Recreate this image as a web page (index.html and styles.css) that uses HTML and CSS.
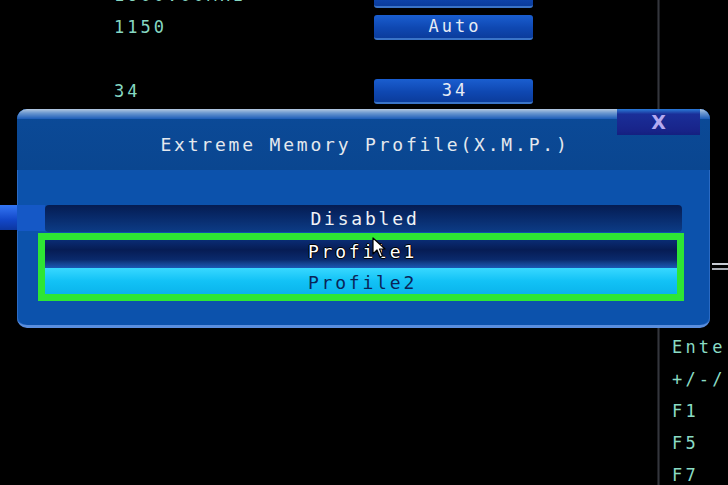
FILE: index.html
```html
<!DOCTYPE html>
<html>
<head>
<meta charset="utf-8">
<title>Extreme Memory Profile</title>
<link rel="stylesheet" href="styles.css">
</head>
<body>
<div class="screen">
  <div class="settings">
    <div class="row"><span class="label">1600.00MHz</span><span class="btn">Auto</span></div>
    <div class="row"><span class="label">1150</span><span class="btn">Auto</span></div>
    <div class="row"></div>
    <div class="row"><span class="label">34</span><span class="btn">34</span></div>
    <div class="row"></div>
    <div class="row"></div>
    <div class="row"></div>
    <div class="row active"></div>
  </div>
  <div class="divider"></div>
  <div class="help">
    <div class="rule"></div>
    <ul class="keys">
      <li>Enter</li>
      <li>+/-/</li>
      <li>F1</li>
      <li>F5</li>
      <li>F7</li>
    </ul>
  </div>

  <div class="dialog">
    <div class="dialog-head">
      <h1 class="title">Extreme Memory Profile(X.M.P.)</h1>
      <div class="close">X</div>
    </div>
    <div class="dialog-body">
      <div class="marker"></div>
      <div class="options">
        <div class="option">Disabled</div>
        <div class="focus">
          <div class="option selected">Profile1</div>
          <div class="option current">Profile2</div>
        </div>
      </div>
    </div>
  </div>

  <svg class="cursor" width="14" height="22" viewBox="0 0 14 22">
    <path d="M1 1 L1 17 L5 13 L8 20 L10.5 19 L7.5 12 L13 12 Z" fill="#ffffff" stroke="#000000" stroke-width="1.2" stroke-linejoin="round"/>
  </svg>
</div>
</body>
</html>
```

FILE: styles.css
```css
* { box-sizing: border-box; }

html, body {
  margin: 0;
  padding: 0;
  background: #000;
}

body {
  width: 728px;
  height: 485px;
  overflow: hidden;
  font-family: "DejaVu Sans Mono", "Liberation Mono", monospace;
}

.screen {
  position: relative;
  width: 728px;
  height: 485px;
  display: grid;
  grid-template-columns: 657px 3px 1fr;
  overflow: hidden;
}

/* settings list behind the dialog */
.settings {
  margin-top: -21px;
}

.row {
  height: 32px;
  display: grid;
  grid-template-columns: 374px 159px;
  align-items: center;
}

.row.active {
  background: linear-gradient(#3476f4, #1247c8 60%, #0c36a0) no-repeat 0 2px / 100% 25px;
}

.label {
  padding-left: 114px;
  color: #86d8c2;
  font-size: 17px;
  letter-spacing: 3px;
}

.btn {
  height: 25px;
  display: flex;
  align-items: center;
  justify-content: center;
  padding-left: 3px;
  border-radius: 3px;
  background: linear-gradient(#1a5ed0, #0f48b2 55%, #0b3c9c);
  border-bottom: 2px solid #3a74c8;
  color: #e6ecf4;
  font-size: 17px;
  letter-spacing: 3px;
}

.divider {
  background: linear-gradient(90deg, #101014, #34363c, #101014);
}

/* help column on the right */
.help {
  padding-top: 263px;
}

.rule {
  margin-left: 52px;
  height: 7px;
  border-top: 2px solid #c8ccd4;
  border-bottom: 2px solid #a8acb4;
}

.keys {
  list-style: none;
  margin: 61px 0 0;
  padding: 0 0 0 12px;
  color: #8adcc4;
  font-size: 17px;
  letter-spacing: 3.2px;
  white-space: nowrap;
}

.keys li {
  height: 32px;
  line-height: 32px;
}

/* XMP dialog */
.dialog {
  position: absolute;
  left: 17px;
  top: 109px;
  width: 693px;
  height: 219px;
  border-radius: 10px;
  background: #0c52ac;
  border-bottom: 3px solid #5a8ede;
  overflow: hidden;
  box-shadow: inset 1px 0 0 #2a6ac4, inset -1px 0 0 #2a6ac4;
}

.dialog-head {
  position: relative;
  height: 61px;
  padding-top: 9px;
  background:
    linear-gradient(#b4c8e0, #6c98d0 40%, #1c5cb8) no-repeat 0 0 / 100% 10px,
    linear-gradient(#0b4a98, #0a4690);
}

.title {
  margin: 0;
  height: 52px;
  display: flex;
  align-items: center;
  justify-content: center;
  padding-left: 3px;
  font-weight: normal;
  font-size: 18px;
  letter-spacing: 2.8px;
  color: #e4e8ee;
}

.close {
  position: absolute;
  top: 0;
  right: 10px;
  width: 83px;
  height: 26px;
  display: flex;
  align-items: center;
  justify-content: center;
  background: linear-gradient(#2a7ad8, #1a2e98 20%, #18248a 80%, #142080);
  color: #b4aaf0;
  font-family: "DejaVu Sans", sans-serif;
  font-size: 19px;
  font-weight: bold;
}

.dialog-body {
  position: relative;
  padding: 35px 28px 0 28px;
}

.marker {
  position: absolute;
  left: 0;
  top: 35px;
  width: 28px;
  height: 26px;
  background: #1558c6;
}

.option {
  height: 27px;
  display: flex;
  align-items: center;
  justify-content: center;
  padding-left: 3px;
  border-radius: 4px;
  background: linear-gradient(#051c52, #082a6a 45%, #0c3c86);
  color: #f0f2f6;
  font-size: 18px;
  letter-spacing: 2.8px;
}

.focus {
  margin: 1px -2px 0 -7px;
  border: 7px solid #2ee634;
  display: grid;
  grid-template-rows: 28px 26px;
}

.option.selected {
  height: 28px;
  padding-bottom: 5px;
  border-radius: 0;
  background: linear-gradient(#0a2c74, #061c54 35%, #0a2a6c 70%, #12408c 82%, #1a58b4);
  color: #fff;
  text-shadow: 1px 0 #000, -1px 0 #000, 0 1px #000, 0 -1px #000;
}

.option.current {
  height: 26px;
  padding-top: 2px;
  border-radius: 0;
  background: linear-gradient(#38d8ff, #12c2f6 50%, #0ab4ec);
  color: #0a2458;
}

.cursor {
  position: absolute;
  left: 372px;
  top: 237px;
}
```
